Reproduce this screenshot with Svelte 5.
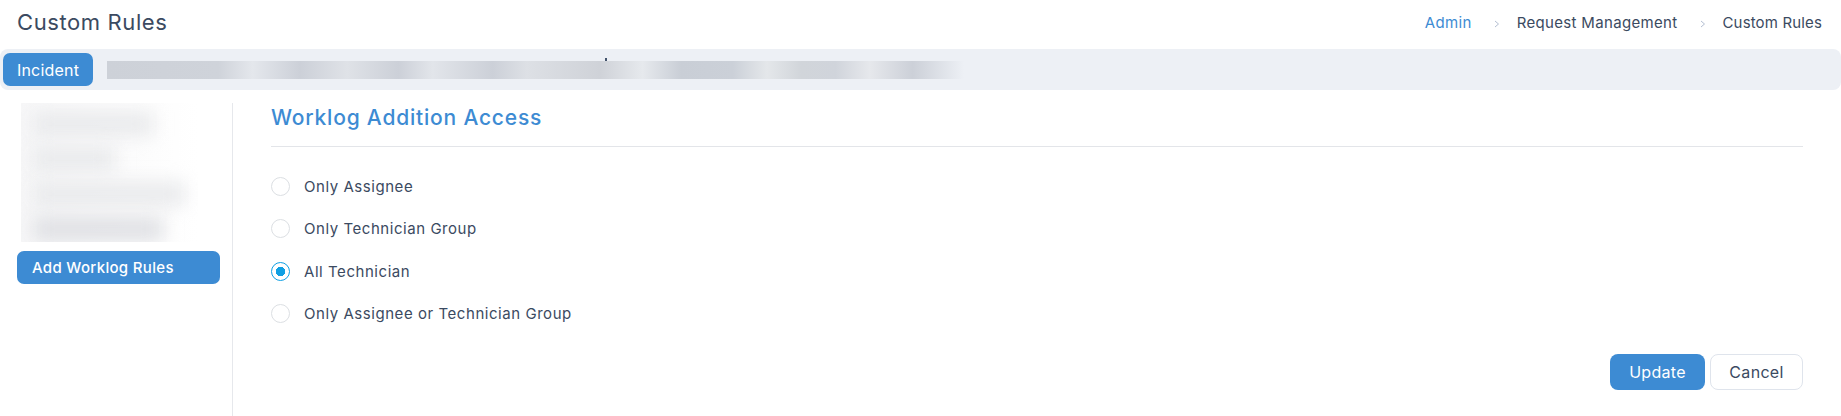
<script>
	let options = [
		'Only Assignee',
		'Only Technician Group',
		'All Technician',
		'Only Assignee or Technician Group'
	];
	let selected = $state('All Technician');
</script>

<div class="page">
	<header class="topbar">
		<h1>Custom Rules</h1>
		<nav class="crumbs">
			<a href="#admin">Admin</a>
			<svg class="sep" width="6" height="8" viewBox="0 0 6 8"><path d="M1 1l3.5 3L1 7" fill="none" stroke="#b4bfd2" stroke-width="1" /></svg>
			<span>Request Management</span>
			<svg class="sep" width="6" height="8" viewBox="0 0 6 8"><path d="M1 1l3.5 3L1 7" fill="none" stroke="#b4bfd2" stroke-width="1" /></svg>
			<span class="current">Custom Rules</span>
		</nav>
	</header>

	<div class="tabs">
		<button class="btn primary tab">Incident</button>
		<div class="tab-blur"></div>
	</div>

	<main class="body">
		<aside class="side">
			<div class="rule-list">
				<div class="smear one"></div>
				<div class="smear two"></div>
				<div class="smear three"></div>
				<div class="smear four"></div>
			</div>
			<button class="btn primary add">Add Worklog Rules</button>
		</aside>

		<section class="content">
			<h2>Worklog Addition Access</h2>
			<div class="radios">
				{#each options as option}
					<label class="radio">
						<input type="radio" name="access" value={option} bind:group={selected} />
						<span>{option}</span>
					</label>
				{/each}
			</div>
			<div class="actions">
				<button class="btn primary update">Update</button>
				<button class="btn cancel">Cancel</button>
			</div>
		</section>
	</main>
</div>

<style>
	:global(body) {
		margin: 0;
		background: #fff;
	}
	.page {
		height: 416px;
		overflow: hidden;
		font-family: Inter, "Noto Sans", sans-serif;
		color: #3b4a61;
		display: flex;
		flex-direction: column;
	}
	.topbar {
		height: 49px;
		display: flex;
		align-items: center;
		justify-content: space-between;
		padding: 0 19px 5px 17px;
		box-sizing: border-box;
	}
	h1 {
		margin: 0;
		font-size: 22px;
		font-weight: 400;
		letter-spacing: 0.6px;
	}
	.crumbs {
		display: flex;
		align-items: center;
		font-size: 15px;
		letter-spacing: 0.33px;
	}
	.crumbs a {
		color: #3d8bd3;
		text-decoration: none;
	}
	.current {
		letter-spacing: 0.15px;
	}
	.sep {
		margin: 3px 17px 0 22px;
	}
	.tabs {
		height: 41px;
		background: #edf0f5;
		border-radius: 8px;
		display: flex;
		align-items: center;
		padding-left: 3px;
	}
	.btn {
		font-family: inherit;
		font-size: 15px;
		border: none;
		border-radius: 6px;
		padding: 0;
		cursor: pointer;
	}
	.primary {
		background: #3d8bd3;
		color: #fff;
	}
	.tab {
		width: 90px;
		height: 33px;
		font-size: 16px;
		letter-spacing: 0.2px;
		border-radius: 7px;
	}
	.tab-blur {
		position: relative;
		width: 857px;
		height: 18px;
		margin-left: 14px;
		background: linear-gradient(90deg, #cdd1d8 0%, #cfd3da 13%, #e4e7ec 17%, #ccd0d8 22.5%, #dfe2e7 28%, #ccd0d8 34%, #e2e5ea 38%, #ccd0d8 45%, #dde0e5 49%, #cfd2d8 57.5%, #e6e9ed 62.5%, #c9ced6 67%, #cbd0d8 73%, #e4e7ea 77%, #d1d5da 81%, #d0d4db 85%, #e6e8ec 89%, #ccd0d8 94%, #edf0f5 100%);
	}
	.tab-blur::after {
		content: '';
		position: absolute;
		left: 498px;
		top: -3px;
		width: 2px;
		height: 3px;
		background: #44546c;
	}
	.body {
		flex: 1;
		display: flex;
		padding-top: 13px;
		min-height: 0;
	}
	.side {
		width: 233px;
		box-sizing: border-box;
		border-right: 1px solid #e6e8ec;
		padding-left: 17px;
	}
	.rule-list {
		width: 177px;
		height: 139px;
		margin-left: 4px;
		overflow: hidden;
		background: linear-gradient(90deg, #f7f7f8, #fdfdfd 75%, #fff);
		display: flex;
		flex-direction: column;
		gap: 11px;
		padding: 9px 0 0 12px;
		box-sizing: border-box;
	}
	.smear {
		flex: none;
		height: 24px;
		background: #e9eaec;
		filter: blur(9px);
	}
	.one {
		width: 120px;
	}
	.two {
		width: 82px;
	}
	.three {
		width: 152px;
	}
	.four {
		width: 130px;
		background: #dfe0e4;
	}
	.add {
		display: block;
		width: 203px;
		height: 33px;
		margin-top: 9px;
		text-align: left;
		padding-left: 15px;
		font-weight: 500;
		letter-spacing: 0.32px;
		border-radius: 7px;
	}
	.content {
		flex: 1;
		padding: 0 38px;
		display: flex;
		flex-direction: column;
	}
	h2 {
		margin: 0;
		height: 43px;
		font-size: 21px;
		font-weight: 500;
		color: #3d8bd3;
		border-bottom: 1px solid #e3e5e9;
		line-height: 30px;
		letter-spacing: 0.8px;
	}
	.radios {
		display: flex;
		flex-direction: column;
		gap: 23.3px;
		margin-top: 30px;
	}
	.radio {
		display: flex;
		align-items: center;
		gap: 14px;
		height: 19px;
		font-size: 15px;
		letter-spacing: 0.55px;
	}
	.radio input {
		appearance: none;
		margin: 0;
		width: 19px;
		height: 19px;
		border: 1px solid #dcdfe3;
		border-radius: 50%;
		background: #fff;
		box-sizing: border-box;
	}
	.radio input:checked {
		border-color: #0f9fe3;
		background: radial-gradient(circle, #0f9fe3 0 4.5px, #fff 5px);
	}
	.actions {
		display: flex;
		justify-content: flex-end;
		gap: 5px;
		margin-top: 31px;
	}
	.update {
		width: 95px;
		height: 36px;
		border-radius: 8px;
		font-size: 16px;
		letter-spacing: 0.3px;
	}
	.cancel {
		width: 93px;
		height: 36px;
		border-radius: 8px;
		background: #fff;
		color: #3b4a61;
		border: 1px solid #dfe4ec;
		font-size: 16px;
		letter-spacing: 0.3px;
	}
</style>
